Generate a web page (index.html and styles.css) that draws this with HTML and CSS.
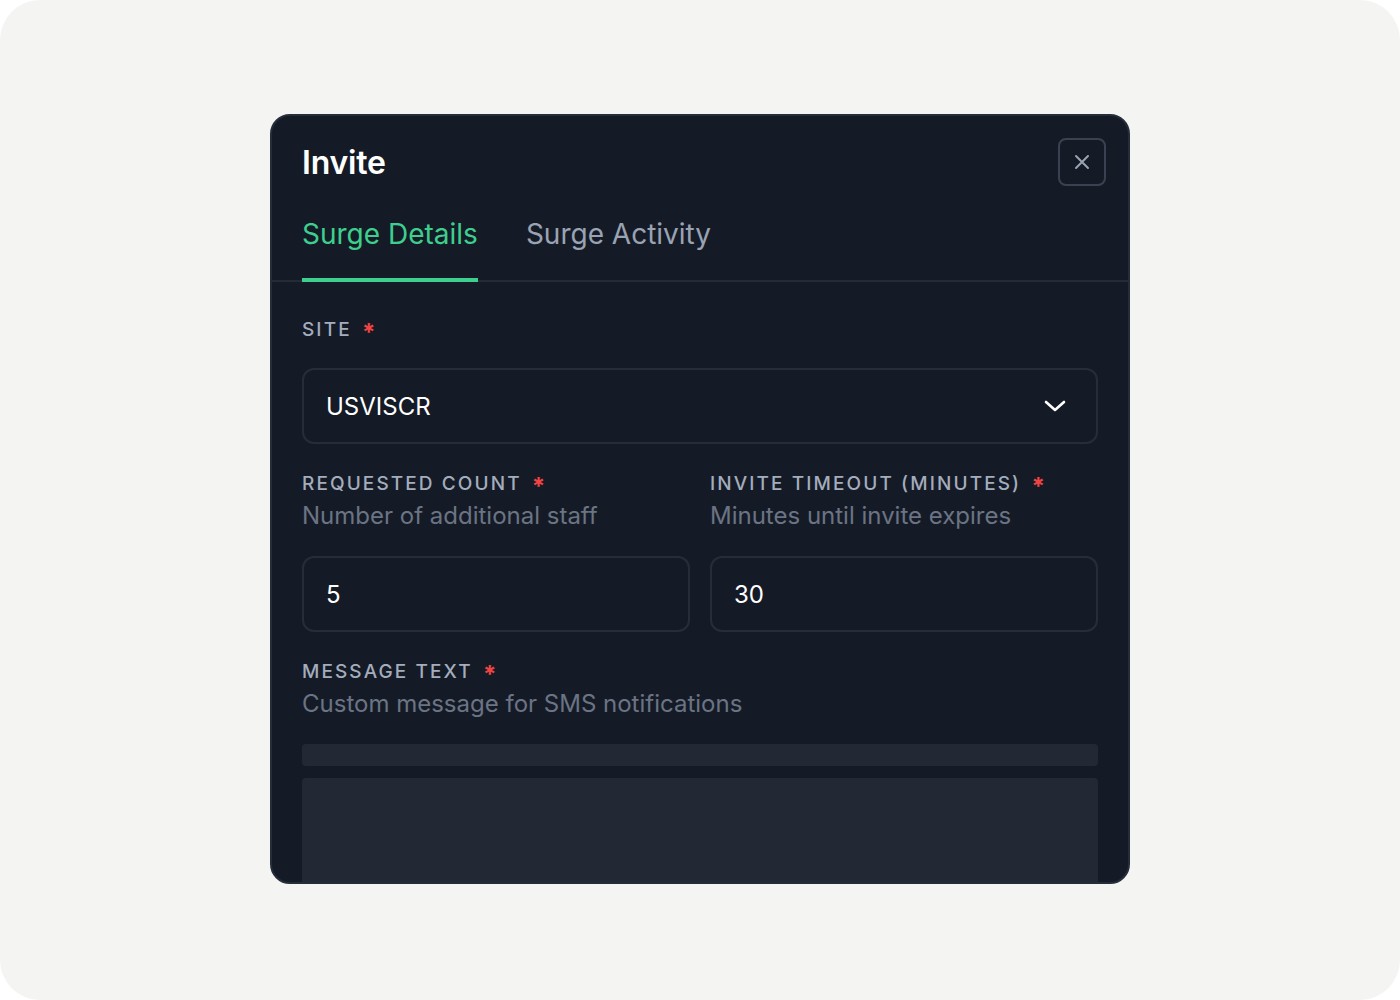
FILE: index.html
```html
<!DOCTYPE html>
<html lang="en">
<head>
<meta charset="utf-8">
<title>Invite</title>
<link rel="stylesheet" href="styles.css">
</head>
<body>
<div class="page">
  <div class="modal">
    <div class="header">
      <h1 class="title">Invite</h1>
      <button class="close" aria-label="Close">
        <svg width="18" height="18" viewBox="0 0 18 18" fill="none" stroke="#9aa3b2" stroke-width="2" stroke-linecap="round"><path d="M3 3L15 15M15 3L3 15"/></svg>
      </button>
    </div>
    <div class="tabs">
      <div class="tab active">Surge Details</div>
      <div class="tab">Surge Activity</div>
    </div>
    <div class="body">
      <div class="field">
        <div class="label">SITE <span class="req">*</span></div>
        <div class="input select">
          <span>USVISCR</span>
          <svg width="22" height="14" viewBox="0 0 22 14" fill="none" stroke="#ffffff" stroke-width="2.6" stroke-linecap="round" stroke-linejoin="round"><path d="M2 3L11 11L20 3"/></svg>
        </div>
      </div>
      <div class="row">
        <div class="field">
          <div class="label">REQUESTED COUNT <span class="req">*</span></div>
          <div class="desc">Number of additional staff</div>
          <div class="input">5</div>
        </div>
        <div class="field">
          <div class="label">INVITE TIMEOUT (MINUTES) <span class="req">*</span></div>
          <div class="desc">Minutes until invite expires</div>
          <div class="input">30</div>
        </div>
      </div>
      <div class="field">
        <div class="label">MESSAGE TEXT <span class="req">*</span></div>
        <div class="desc">Custom message for SMS notifications</div>
        <div class="toolbar"></div>
        <div class="textarea"></div>
      </div>
    </div>
  </div>
</div>
</body>
</html>
```
FILE: styles.css
```css
* { box-sizing: border-box; }
html, body { margin: 0; padding: 0; background: #ffffff; }
body { font-family: Inter, "Noto Sans", sans-serif; }
.page {
  width: 1400px;
  height: 1000px;
  background: #f4f4f2;
  border-radius: 40px;
  display: flex;
  justify-content: center;
  padding-top: 114px;
}
.modal {
  width: 860px;
  height: 770px;
  background: #151b26;
  border: 2px solid #262d3a;
  border-radius: 20px;
  overflow: hidden;
  display: flex;
  flex-direction: column;
}
.header {
  display: flex;
  justify-content: space-between;
  align-items: center;
  padding: 22px 22px 0 30px;
}
.title {
  margin: 0;
  font-size: 32px;
  font-weight: 600;
  color: #ffffff;
  letter-spacing: -0.2px;
}
.close {
  width: 48px;
  height: 48px;
  border: 2px solid #3a4251;
  border-radius: 8px;
  background: transparent;
  display: flex;
  align-items: center;
  justify-content: center;
  padding: 0;
}
.tabs {
  display: flex;
  gap: 48px;
  padding: 28px 30px 0;
  border-bottom: 2px solid #242a36;
}
.tab {
  font-size: 28px;
  line-height: 40px;
  color: #9aa3b3;
  padding-bottom: 24px;
  margin-bottom: -2px;
  border-bottom: 4px solid transparent;
}
.tab.active {
  color: #3ecf8e;
  border-bottom-color: #3ecf8e;
}
.body {
  padding: 34px 30px 0;
  display: flex;
  flex-direction: column;
  gap: 26px;
}
.row {
  display: grid;
  grid-template-columns: 1fr 1fr;
  gap: 20px;
}
.label {
  font-size: 19px;
  line-height: 28px;
  height: 28px;
  letter-spacing: 2.1px;
  color: #a3adbd;
  font-weight: 500;
  margin-bottom: 24px;
}
.req {
  color: #ef4444;
  margin-left: 3px;
  font-size: 24px;
  font-weight: 700;
  line-height: 0;
  vertical-align: -5px;
}
.desc {
  font-size: 24px;
  line-height: 32px;
  color: #6b7484;
  margin-top: -22px;
  margin-bottom: 24px;
}
.input {
  height: 76px;
  border: 2px solid #262d3a;
  border-radius: 12px;
  padding: 0 22px;
  display: flex;
  align-items: center;
  font-size: 24px;
  color: #ffffff;
}
.select { justify-content: space-between; padding-right: 30px; }
.toolbar {
  height: 22px;
  background: #222834;
  border-radius: 4px;
  margin-bottom: 12px;
}
.textarea {
  height: 200px;
  background: #222834;
  border-radius: 4px;
}
```
